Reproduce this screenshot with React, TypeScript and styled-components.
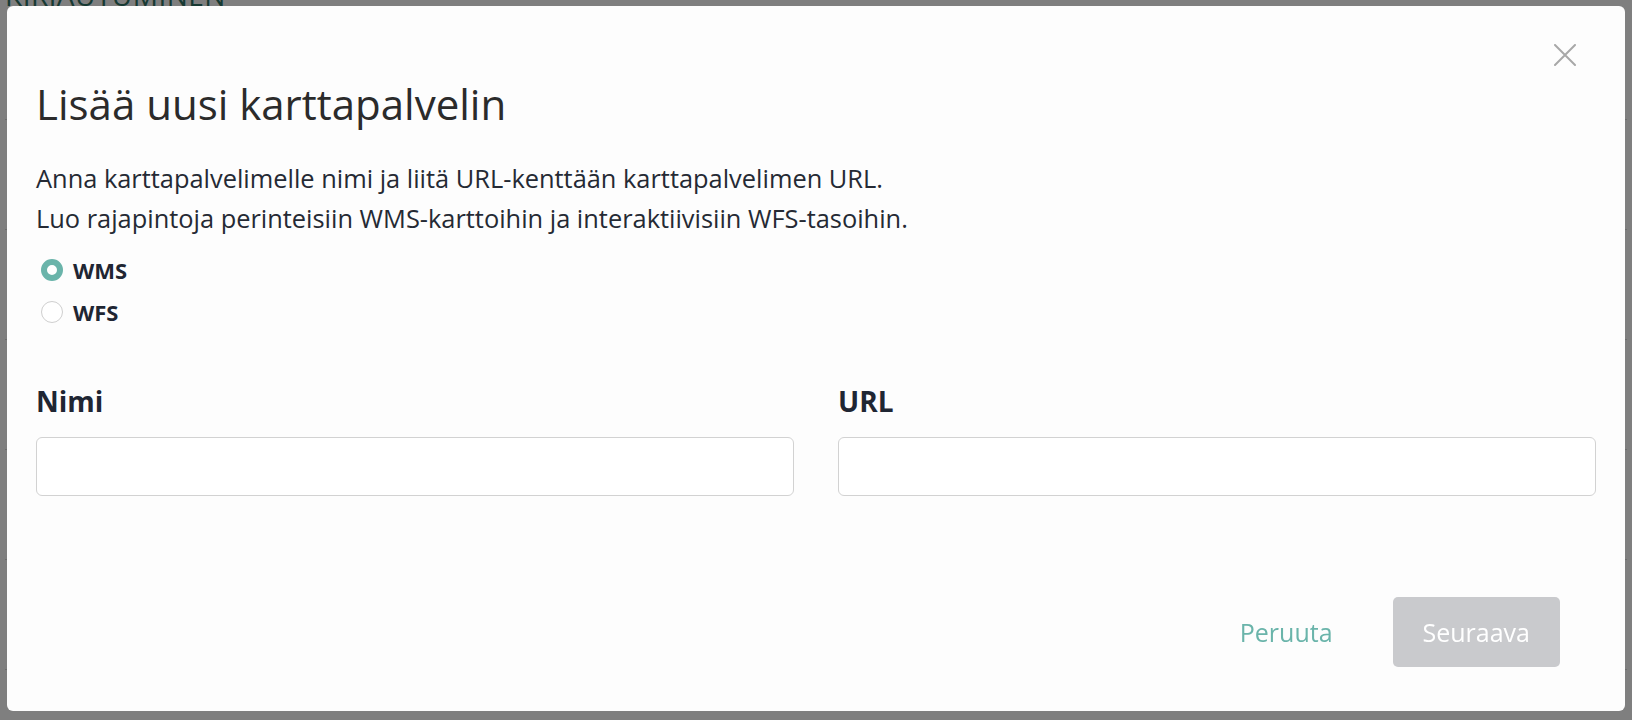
import { useState } from 'react';
import styled, { createGlobalStyle } from 'styled-components';

const GlobalStyle = createGlobalStyle`
  * {
    box-sizing: border-box;
  }
  body {
    margin: 0;
    font-family: 'Open Sans', 'Noto Sans', sans-serif;
    background: #ffffff;
  }
`;

const colors = {
  teal: '#6ab4aa',
  text: '#252a34',
  title: '#2b2b2b',
  label: '#1f2633',
  border: '#d2d2d2',
  disabled: '#c9cacd',
};

type ServiceType = 'WMS' | 'WFS';

const rowCount = 6;

export default function App() {
  const [type, setType] = useState<ServiceType>('WMS');
  const [name, setName] = useState('');
  const [url, setUrl] = useState('');

  return (
    <>
      <GlobalStyle />
      <Page>
        <PageHeading>KIRJAUTUMINEN</PageHeading>
        {Array.from({ length: rowCount }, (_, i) => (
          <PageRow key={i} />
        ))}
      </Page>

      <Overlay>
        <Modal role="dialog" aria-labelledby="modal-title">
          <CloseButton type="button" aria-label="Sulje">
            <svg width="22" height="22" viewBox="0 0 22 22">
              <path d="M1 1 L21 21 M21 1 L1 21" stroke="#a8a8a8" strokeWidth="2" strokeLinecap="round" />
            </svg>
          </CloseButton>

          <Title id="modal-title">Lisää uusi karttapalvelin</Title>
          <Description>
            Anna karttapalvelimelle nimi ja liitä URL-kenttään karttapalvelimen URL.
            <br />
            Luo rajapintoja perinteisiin WMS-karttoihin ja interaktiivisiin WFS-tasoihin.
          </Description>

          <RadioGroup>
            {(['WMS', 'WFS'] as ServiceType[]).map((option) => (
              <RadioLabel key={option}>
                <RadioInput
                  type="radio"
                  name="service-type"
                  checked={type === option}
                  onChange={() => setType(option)}
                />
                <RadioDot $checked={type === option} />
                {option}
              </RadioLabel>
            ))}
          </RadioGroup>

          <Fields>
            <Field>
              <FieldLabel htmlFor="service-name">Nimi</FieldLabel>
              <TextInput id="service-name" value={name} onChange={(e) => setName(e.target.value)} />
            </Field>
            <Field>
              <FieldLabel htmlFor="service-url">URL</FieldLabel>
              <TextInput id="service-url" value={url} onChange={(e) => setUrl(e.target.value)} />
            </Field>
          </Fields>

          <Footer>
            <TextButton type="button">Peruuta</TextButton>
            <PrimaryButton type="button" disabled={!name || !url}>
              Seuraava
            </PrimaryButton>
          </Footer>
        </Modal>
      </Overlay>
    </>
  );
}

const Page = styled.div`
  height: 720px;
  overflow: hidden;
  padding: 0 5px;
`;

const PageHeading = styled.h1`
  margin: -20px 0 0 0;
  font-size: 28px;
  line-height: 30px;
  font-weight: 400;
  color: #2f7466;
  letter-spacing: 0.5px;
`;

const PageRow = styled.div`
  height: 110px;
  border-bottom: 1px solid #d9d9d9;
`;

const Overlay = styled.div`
  position: fixed;
  inset: 0;
  display: flex;
  padding: 6px 7px 9px 7px;
  background: rgba(0, 0, 0, 0.5);
`;

const Modal = styled.div`
  position: relative;
  flex: 1;
  display: flex;
  flex-direction: column;
  padding: 0 29px;
  background: #fdfdfd;
  border-radius: 6px;
`;

const CloseButton = styled.button`
  position: absolute;
  top: 38px;
  right: 49px;
  width: 22px;
  height: 22px;
  padding: 0;
  border: none;
  background: none;
  cursor: pointer;
  svg {
    display: block;
  }
`;

const Title = styled.h2`
  margin: 73px 0 0 0;
  font-size: 42px;
  line-height: 50px;
  font-weight: 400;
  color: ${colors.title};
`;

const Description = styled.p`
  margin: 29px 0 0 0;
  font-size: 25.4px;
  line-height: 40px;
  color: ${colors.text};
`;

const RadioGroup = styled.div`
  display: flex;
  flex-direction: column;
  margin-top: 11px;
`;

const RadioLabel = styled.label`
  display: flex;
  align-items: center;
  gap: 10px;
  height: 42px;
  padding-left: 5px;
  font-size: 22px;
  font-weight: 700;
  color: ${colors.label};
  cursor: pointer;
`;

const RadioInput = styled.input`
  position: absolute;
  opacity: 0;
  width: 0;
  height: 0;
`;

const RadioDot = styled.span<{ $checked: boolean }>`
  width: 22px;
  height: 22px;
  border-radius: 50%;
  background: #ffffff;
  border: ${(p) => (p.$checked ? `6px solid ${colors.teal}` : '1px solid #cfcfcf')};
  flex-shrink: 0;
`;

const Fields = styled.div`
  display: grid;
  grid-template-columns: 1fr 1fr;
  column-gap: 44px;
  margin-top: 51px;
`;

const Field = styled.div`
  display: flex;
  flex-direction: column;
  gap: 19px;
`;

const FieldLabel = styled.label`
  font-size: 28px;
  line-height: 34px;
  font-weight: 700;
  color: ${colors.label};
`;

const TextInput = styled.input`
  height: 59px;
  padding: 0 16px;
  border: 1px solid ${colors.border};
  border-radius: 6px;
  background: #ffffff;
  font-family: inherit;
  font-size: 22px;
  color: ${colors.text};
  outline: none;

  &:focus {
    border-color: ${colors.teal};
  }
`;

const Footer = styled.div`
  margin-top: auto;
  display: flex;
  justify-content: flex-end;
  align-items: center;
  gap: 30px;
  padding: 0 36px 44px 0;
`;

const TextButton = styled.button`
  height: 70px;
  padding: 0 30px;
  border: none;
  background: none;
  font-family: inherit;
  font-size: 25px;
  color: ${colors.teal};
  cursor: pointer;
`;

const PrimaryButton = styled.button`
  height: 70px;
  padding: 0 30px;
  border: none;
  border-radius: 5px;
  background: ${colors.teal};
  font-family: inherit;
  font-size: 25px;
  color: #ffffff;
  cursor: pointer;

  &:disabled {
    background: ${colors.disabled};
    cursor: default;
  }
`;
